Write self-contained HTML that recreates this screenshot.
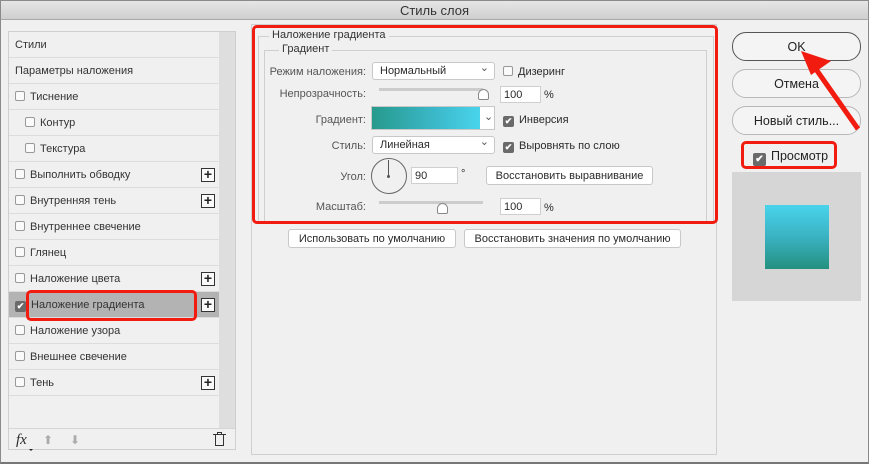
<!DOCTYPE html>
<html><head><meta charset="utf-8"><style>
*{box-sizing:border-box;margin:0;padding:0}
body{width:869px;height:464px;background:#f0f0f0;font-family:"Liberation Sans",sans-serif;font-size:11px;color:#2a2a2a;position:relative;overflow:hidden}
.a{position:absolute}
.title{left:0;top:0;width:869px;height:20px;background:linear-gradient(#e6e6e6,#cfcfcf);border:1px solid #8a8a8a;border-bottom:1px solid #a8a8a8;text-align:center;line-height:19px;font-size:13px;color:#333}
.win{left:0;top:20px;width:869px;height:444px;border:1px solid #8a8a8a;border-top:none;border-bottom:2px solid #777}
.lp{left:8px;top:31px;width:228px;height:419px;border:1px solid #cfcfcf;background:#f0f0f0}
.sb{left:219px;top:32px;width:16px;height:396px;background:#dedede}
.row{position:absolute;left:9px;width:210px;height:26px;border-bottom:1px solid #dcdcdc;line-height:27px;padding-left:6px;font-size:11px;color:#333}
.cb{display:inline-block;width:10px;height:10px;border:1px solid #999;border-radius:2px;background:#fafafa;vertical-align:-1px;margin-right:5px}
.cbk{display:inline-block;width:11px;height:11px;border-radius:2px;background:#6a6a6a;vertical-align:-1px;margin-right:5px;color:#fff;font-size:9px;line-height:11px;text-align:center;font-weight:bold}
.plus{position:absolute;right:4px;top:6px;width:14px;height:14px;border:1px solid #333;background:#fafafa;font-size:14px;line-height:11px;text-align:center;font-weight:bold;color:#222}
.cp{left:251px;top:24px;width:466px;height:431px;border:1px solid #cfcfcf}
.fs{border:1px solid #cfcfcf;border-bottom:none}
.lg{background:#f0f0f0;padding:0 3px;font-size:11px;color:#333}
.lab{text-align:right;color:#555;width:100px}
.sel{background:#fff;border:1px solid #c8c8c8;border-radius:3px;height:18px;line-height:17px;padding-left:7px}
.sel:after{content:"⌄";position:absolute;right:5px;top:-3px;font-size:11px;color:#555}
.inp{background:#fff;border:1px solid #cfcfcf;height:17px;line-height:16px;padding-left:3px}
.btn{background:#fff;border:1px solid #c8c8c8;border-radius:3px;height:19px;line-height:18px;text-align:center;font-size:11px}
.rb{background:#f4f4f4;border:1px solid #b8b8b8;border-radius:14px;height:29px;line-height:28px;text-align:center;font-size:12.5px;color:#222}
.red{border:3px solid #f21b0f;border-radius:5px}
</style></head><body>
<div class="a title">Стиль слоя</div>
<div class="a win"></div>
<div class="a lp"></div>
<div class="a sb"></div>
<div class="row" style="top:32px">Стили</div>
<div class="row" style="top:58px">Параметры наложения</div>
<div class="row" style="top:84px"><span class="cb"></span>Тиснение</div>
<div class="row" style="top:110px;padding-left:16px"><span class="cb"></span>Контур</div>
<div class="row" style="top:136px;padding-left:16px"><span class="cb"></span>Текстура</div>
<div class="row" style="top:162px"><span class="cb"></span>Выполнить обводку<span class="plus">+</span></div>
<div class="row" style="top:188px"><span class="cb"></span>Внутренняя тень<span class="plus">+</span></div>
<div class="row" style="top:214px"><span class="cb"></span>Внутреннее свечение</div>
<div class="row" style="top:240px"><span class="cb"></span>Глянец</div>
<div class="row" style="top:266px"><span class="cb"></span>Наложение цвета<span class="plus">+</span></div>
<div class="row" style="top:292px;background:#b3b3b3"><span class="cbk">✔</span>Наложение градиента<span class="plus">+</span></div>
<div class="row" style="top:318px"><span class="cb"></span>Наложение узора</div>
<div class="row" style="top:344px"><span class="cb"></span>Внешнее свечение</div>
<div class="row" style="top:370px"><span class="cb"></span>Тень<span class="plus">+</span></div>
<div class="a" style="left:9px;top:428px;width:226px;border-top:1px solid #d6d6d6"></div>
<div class="a" style="left:16px;top:432px;font-style:italic;font-family:'Liberation Serif',serif;font-size:15px">fx</div>
<div class="a" style="left:29px;top:449px;border-left:2px solid transparent;border-right:2px solid transparent;border-top:2px solid #222"></div>
<div class="a" style="left:43px;top:433px;color:#aaa;font-size:12px">⬆</div>
<div class="a" style="left:70px;top:433px;color:#aaa;font-size:12px">⬇</div>
<div class="a" style="left:215px;top:435px;width:9px;height:11px;border:1.5px solid #333;border-top:none"></div>
<div class="a" style="left:213px;top:434px;width:13px;border-top:1.5px solid #333"></div>
<div class="a" style="left:217px;top:432px;width:5px;height:2px;border:1px solid #333;border-bottom:none"></div>
<div class="a red" style="left:26px;top:290px;width:171px;height:31px"></div>

<div class="a cp"></div>
<div class="a fs" style="left:258px;top:36px;width:456px;height:186px"></div>
<div class="a lg" style="left:269px;top:29px">Наложение градиента</div>
<div class="a fs" style="left:264px;top:50px;width:443px;height:172px"></div>
<div class="a lg" style="left:279px;top:43px">Градиент</div>
<div class="a lab" style="left:266px;top:66px;width:100px">Режим наложения:</div>
<div class="a sel" style="left:372px;top:62px;width:123px">Нормальный</div>
<div class="a" style="left:503px;top:66px"><span class="cb"></span>Дизеринг</div>
<div class="a lab" style="left:266px;top:88px">Непрозрачность:</div>
<div class="a" style="left:379px;top:88px;width:104px;height:3px;background:#ccc"></div>
<div class="a" style="left:478px;top:89px;width:11px;height:11px;border:1px solid #888;border-radius:6px 6px 2px 2px;background:#fff"></div>
<div class="a inp" style="left:500px;top:86px;width:41px">100</div>
<div class="a" style="left:544px;top:89px">%</div>
<div class="a lab" style="left:266px;top:114px">Градиент:</div>
<div class="a" style="left:371px;top:106px;width:124px;height:24px;border:1px solid #c8c8c8;background:#fff"></div>
<div class="a" style="left:372px;top:107px;width:108px;height:22px;background:linear-gradient(90deg,#279a8c,#3ab6c6 55%,#49d4ec)"></div>
<div class="a" style="left:484px;top:110px;font-size:11px;color:#555">⌄</div>
<div class="a" style="left:503px;top:114px"><span class="cbk">✔</span>Инверсия</div>
<div class="a lab" style="left:266px;top:140px">Стиль:</div>
<div class="a sel" style="left:372px;top:136px;width:123px">Линейная</div>
<div class="a" style="left:503px;top:140px"><span class="cbk">✔</span>Выровнять по слою</div>
<div class="a lab" style="left:266px;top:171px">Угол:</div>
<div class="a" style="left:371px;top:158px;width:36px;height:36px;border:1px solid #666;border-radius:50%"></div>
<div class="a" style="left:388px;top:160px;width:1px;height:16px;background:#555"></div>
<div class="a" style="left:387px;top:175px;width:3px;height:3px;background:#555;border-radius:50%"></div>
<div class="a inp" style="left:411px;top:167px;width:47px">90</div>
<div class="a" style="left:461px;top:168px">°</div>
<div class="a btn" style="left:486px;top:166px;width:167px">Восстановить выравнивание</div>
<div class="a lab" style="left:266px;top:201px">Масштаб:</div>
<div class="a" style="left:379px;top:201px;width:104px;height:3px;background:#ccc"></div>
<div class="a" style="left:437px;top:203px;width:11px;height:11px;border:1px solid #888;border-radius:6px 6px 2px 2px;background:#fff"></div>
<div class="a inp" style="left:500px;top:198px;width:41px">100</div>
<div class="a" style="left:544px;top:202px">%</div>
<div class="a red" style="left:252px;top:25px;width:466px;height:199px"></div>
<div class="a btn" style="left:288px;top:229px;width:168px">Использовать по умолчанию</div>
<div class="a btn" style="left:464px;top:229px;width:217px">Восстановить значения по умолчанию</div>

<div class="a rb" style="left:732px;top:32px;width:129px;border-color:#555">OK</div>
<div class="a rb" style="left:732px;top:69px;width:129px">Отмена</div>
<div class="a rb" style="left:732px;top:106px;width:129px">Новый стиль...</div>
<div class="a" style="left:753px;top:149px;font-size:12.5px;color:#222"><span class="cbk" style="width:13px;height:13px;line-height:13px;font-size:10px;vertical-align:-2px">✔</span>Просмотр</div>
<div class="a red" style="left:741px;top:141px;width:96px;height:28px"></div>
<div class="a" style="left:732px;top:172px;width:129px;height:129px;background:#d6d6d6"></div>
<div class="a" style="left:765px;top:205px;width:64px;height:64px;background:linear-gradient(#49d4ec,#3ab2c2 50%,#24907f)"></div>
<svg class="a" style="left:795px;top:45px" width="70" height="90"><line x1="63" y1="84" x2="18" y2="20" stroke="#f21b0f" stroke-width="5"/><polygon points="6,6 36,16 16,30" fill="#f21b0f"/></svg>
</body></html>
